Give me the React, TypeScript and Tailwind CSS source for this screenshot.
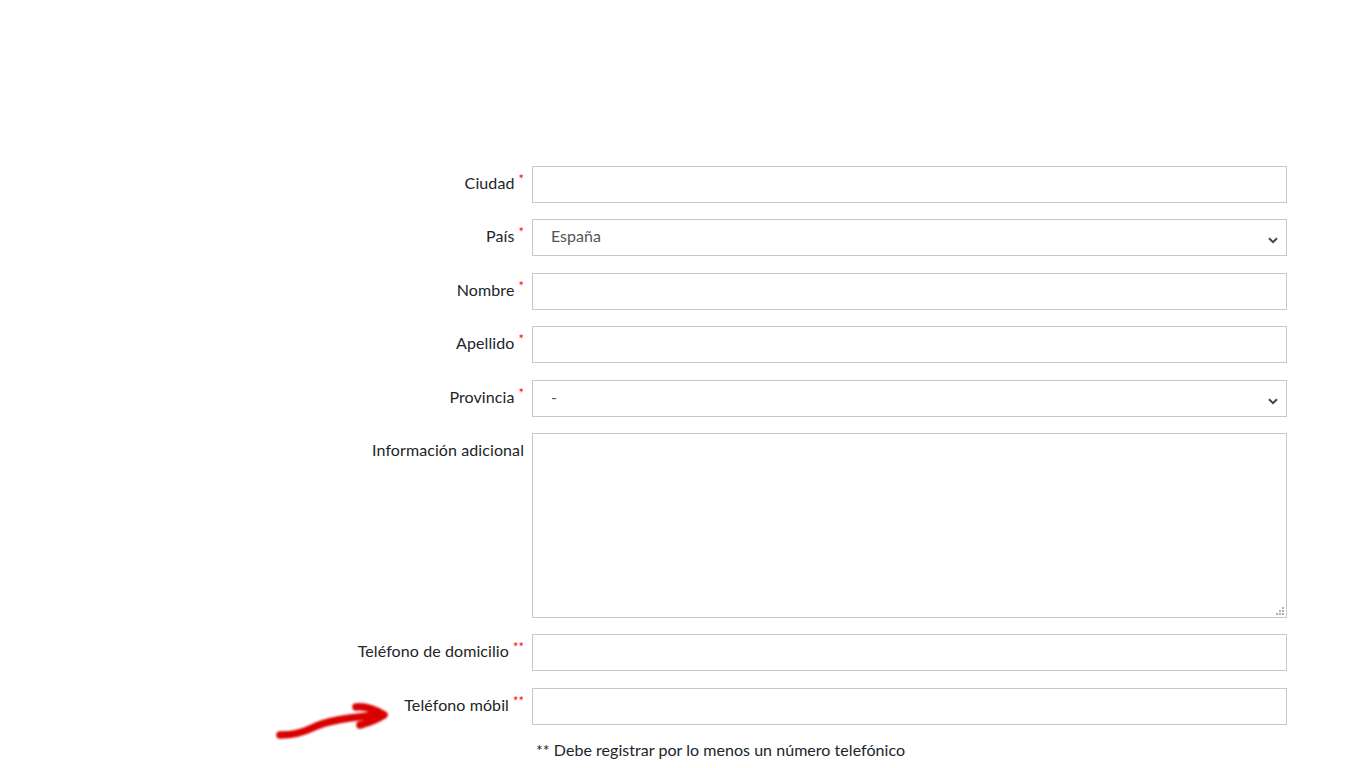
import React from "react";

function Chevron() {
  return (
    <svg width="10" height="7" viewBox="0 0 10 7" className="absolute right-[8px] top-[17px]" fill="none">
      <path d="M1 1.2 L5 5.2 L9 1.2" stroke="#444" strokeWidth="2" />
    </svg>
  );
}

function Label({ text, stars }: { text: string; stars?: string }) {
  return (
    <div className="w-[524px] shrink-0 pt-[6px] text-right whitespace-nowrap tracking-[0.09px]">
      <span>{text}</span>
      {stars && <span className="relative -top-[5px] ml-[4px] text-[13px] leading-none tracking-normal text-[#ff0000]">{stars}</span>}
    </div>
  );
}

function Row({ text, stars, value, select }: { text: string; stars?: string; value?: string; select?: boolean }) {
  return (
    <div className="flex h-[37px] mb-[16.5px]">
      <Label text={text} stars={stars} />
      <div className="relative ml-[8px] w-[755px] h-[37px] border border-[#c8c8c8] bg-white">
        {value && <span className="absolute left-[18px] top-[5px] text-[#555555]">{value}</span>}
        {select && <Chevron />}
      </div>
    </div>
  );
}

export default function App() {
  return (
    <div className="relative h-[768px] w-[1366px] overflow-hidden bg-white pt-[165.75px] text-[16px] leading-[22px] text-[#212529] [font-family:Lato,'Liberation_Sans',sans-serif]">
      <Row text="Ciudad" stars="*" />
      <Row text="País" stars="*" value="España" select />
      <Row text="Nombre" stars="*" />
      <Row text="Apellido" stars="*" />
      <Row text="Provincia" stars="*" value="-" select />
      <div className="flex h-[185px] mb-[16px]">
        <Label text="Información adicional" />
        <div className="relative ml-[8px] w-[755px] h-[185px] border border-[#c8c8c8] bg-white">
          <svg width="9" height="9" viewBox="0 0 9 9" className="absolute right-[1px] bottom-[1px]" fill="#b0b0b0">
            <rect x="6" y="0" width="2" height="2" />
            <rect x="3" y="3" width="2" height="2" />
            <rect x="6" y="3" width="2" height="2" />
            <rect x="0" y="6" width="2" height="2" />
            <rect x="3" y="6" width="2" height="2" />
            <rect x="6" y="6" width="2" height="2" />
          </svg>
        </div>
      </div>
      <Row text="Teléfono de domicilio" stars="**" />
      <Row text="Teléfono móbil" stars="**" />
      <div className="ml-[536px] -mt-[2px] whitespace-nowrap tracking-[0.04px]">** Debe registrar por lo menos un número telefónico</div>
      <svg width="130" height="50" viewBox="0 0 130 50" className="absolute left-[270px] top-[695px]" fill="none">
        <g style={{ filter: "blur(0.8px)" }} stroke="#d90000" strokeLinecap="round" strokeLinejoin="round">
          <path d="M10 40 C24 40 34 37 42 33 C56 26 76 22 112 20" strokeWidth="7.5" />
          <path d="M86 12 C96 11 106 15 114 20 C108 24 98 28 90 30" strokeWidth="7.5" />
        </g>
      </svg>
    </div>
  );
}
